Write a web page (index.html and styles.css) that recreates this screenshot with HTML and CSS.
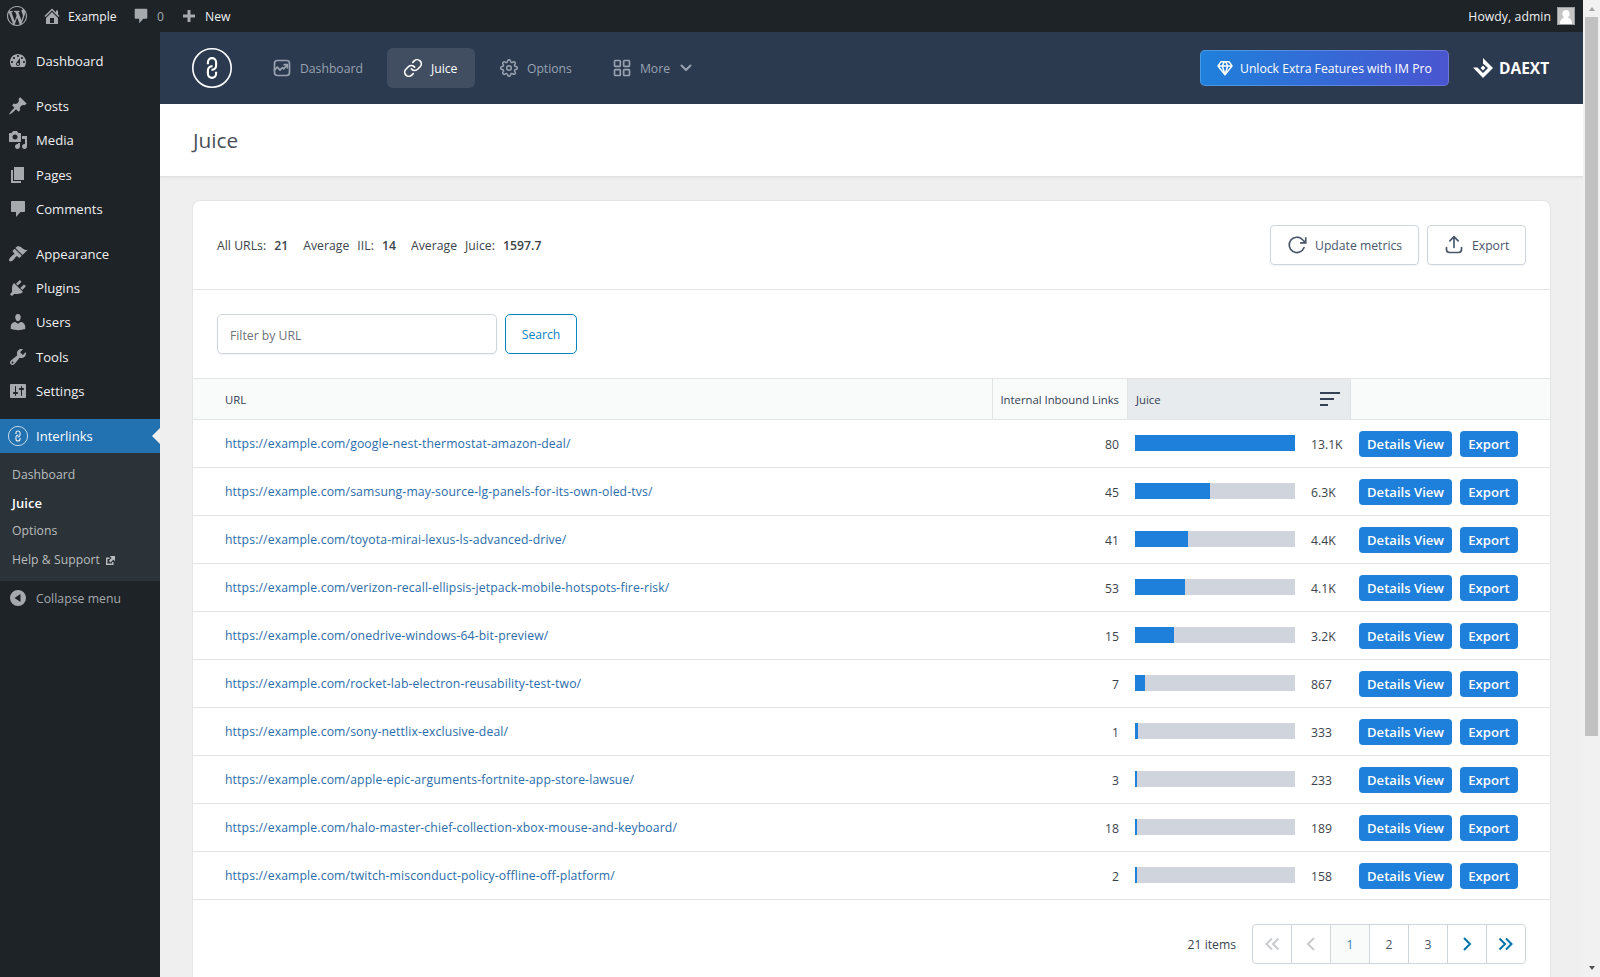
FILE: index.html
```html
<!DOCTYPE html>
<html lang="en">
<head>
<meta charset="utf-8">
<title>Juice</title>
<link rel="stylesheet" href="styles.css">
</head>
<body>
<svg class="defs" aria-hidden="true">
  <symbol id="i-wp" viewBox="0 0 20 20"><path d="M20 10c0-5.51-4.49-10-10-10C4.48 0 0 4.49 0 10c0 5.52 4.48 10 10 10 5.51 0 10-4.48 10-10zM7.78 15.37L4.37 6.22c.55-.02 1.17-.08 1.17-.08.5-.06.44-1.13-.06-1.11 0 0-1.45.11-2.37.11-.18 0-.37 0-.58-.01C4.12 2.69 6.87 1.11 10 1.11c2.33 0 4.45.87 6.05 2.34-.68-.11-1.65.39-1.65 1.58 0 .74.45 1.36.9 2.1.35.61.55 1.36.55 2.46 0 1.49-1.4 5-1.4 5l-3.03-8.37c.54-.02.82-.17.82-.17.5-.05.44-1.25-.06-1.22 0 0-1.44.12-2.38.12-.87 0-2.33-.12-2.33-.12-.5-.03-.56 1.2-.06 1.22l.92.08 1.26 3.41zM17.41 10c.24-.64.74-1.87.43-4.25.7 1.29 1.05 2.71 1.05 4.25 0 3.29-1.73 6.24-4.4 7.78.97-2.59 1.94-5.2 2.92-7.78zM6.1 18.09C3.12 16.65 1.11 13.53 1.11 10c0-1.3.23-2.48.72-3.59C3.25 10.3 4.67 14.2 6.1 18.09zm4.03-6.63l2.58 6.98c-.86.29-1.76.45-2.71.45-.79 0-1.57-.11-2.29-.33.81-2.38 1.62-4.74 2.42-7.1z"/></symbol>
  <symbol id="i-home" viewBox="0 0 20 20"><path d="M16 8.5l1.53 1.53-1.06 1.06L10 4.6l-6.47 6.49-1.06-1.06L10 2.5l4 4v-2h2v4zm-6-2.46l6 5.99V18H4v-5.97zM12 17v-5H8v5h4z"/></symbol>
  <symbol id="i-comment" viewBox="0 0 20 20"><path d="M4 2h12c.55 0 1 .45 1 1v9c0 .55-.45 1-1 1h-3.500l-4.500 5v-5H4c-.55 0-1-.45-1-1V3c0-.55.45-1 1-1z"/></symbol>
  <symbol id="i-dash" viewBox="0 0 20 20"><path d="M3.76 16h12.480c1.1-1.370 1.760-3.110 1.760-5 0-4.420-3.580-8-8-8s-8 3.580-8 8c0 1.890.66 3.630 1.760 5zM10 4c.55 0 1 .45 1 1s-.45 1-1 1-1-.45-1-1 .45-1 1-1zM6 6c.55 0 1 .45 1 1s-.45 1-1 1-1-.45-1-1 .45-1 1-1zm8 0c.55 0 1 .45 1 1s-.45 1-1 1-1-.45-1-1 .45-1 1-1zm-5.370 5.550L12 7v6c0 1.100-.9 2-2 2s-2-.9-2-2c0-.57.24-1.080.63-1.450zM4 10c.55 0 1 .45 1 1s-.45 1-1 1-1-.45-1-1 .45-1 1-1zm12 0c.55 0 1 .45 1 1s-.45 1-1 1-1-.45-1-1 .45-1 1-1zm-5 3c0-.55-.45-1-1-1s-1 .45-1 1 .45 1 1 1 1-.45 1-1z"/></symbol>
  <symbol id="i-post" viewBox="0 0 20 20"><path d="M10.440 3.020l1.820-1.820 6.360 6.350-1.830 1.820c-1.050-.68-2.480-.57-3.410.36l-.75.75c-.92.93-1.040 2.350-.35 3.410l-1.830 1.820-2.410-2.410-2.800 2.790c-.42.42-3.380 2.710-3.800 2.290s1.860-3.390 2.280-3.810l2.790-2.790L4.100 9.360l1.830-1.820c1.050.69 2.480.57 3.400-.36l.75-.75c.93-.92 1.050-2.350.36-3.410z"/></symbol>
  <symbol id="i-media" viewBox="0 0 20 20"><path d="M13 11V4c0-.55-.45-1-1-1h-1.670L9 1H5L3.670 3H2c-.55 0-1 .45-1 1v7c0 .55.45 1 1 1h10c.55 0 1-.45 1-1zM7 4.500c1.380 0 2.500 1.120 2.500 2.500S8.380 9.500 7 9.500 4.500 8.380 4.500 7 5.620 4.500 7 4.500zM14 6h5v10.500c0 1.380-1.120 2.500-2.500 2.500S14 17.880 14 16.500s1.120-2.500 2.500-2.500c.17 0 .34.02.5.05V9h-3V6zm-4 8.050V13h2v3.500c0 1.380-1.120 2.500-2.500 2.500S7 17.880 7 16.500 8.120 14 9.500 14c.17 0 .34.02.5.05z"/></symbol>
  <symbol id="i-page" viewBox="0 0 20 20"><path d="M6 15V2h10v13H6zm-1 1h8v2H3V5h2v11z"/></symbol>
  <symbol id="i-brush" viewBox="0 0 20 20"><path d="M14.480 11.060L7.410 3.990l1.500-1.500c.5-.56 2.300-.47 3.510.32 1.210.8 1.430 1.280 2.910 2.100 1.180.64 2.450 1.260 4.450.85zm-.71.71L6.700 4.700 4.930 6.470c-.39.39-.39 1.020 0 1.410l1.060 1.060c.39.39.39 1.030 0 1.420-.6.6-1.430 1.110-2.210 1.690-.35.26-.7.53-1.010.84C1.430 14.230.4 16.080 1.400 17.070c.99 1 2.840-.03 4.180-1.360.31-.31.58-.66.85-1.020.57-.78 1.080-1.610 1.690-2.210.39-.39 1.020-.39 1.410 0l1.060 1.060c.39.39 1.020.39 1.410 0z"/></symbol>
  <symbol id="i-plug" viewBox="0 0 20 20"><path d="M13.110 4.360L9.870 7.600 8 5.730l3.240-3.240c.35-.34 1.050-.2 1.560.32.52.51.66 1.210.31 1.550zm-8 1.770l.91-1.120 9.010 9.010-1.190.84c-.71.71-2.630 1.160-3.820 1.160H6.140L4.900 17.260c-.59.59-1.540.59-2.120 0-.59-.58-.59-1.530 0-2.120l1.240-1.240v-3.880c0-1.130.4-3.190 1.090-3.890zm7.260 3.970l3.240-3.240c.34-.35 1.040-.21 1.550.31.52.51.66 1.210.31 1.550l-3.240 3.250z"/></symbol>
  <symbol id="i-user" viewBox="0 0 20 20"><path d="M10 9.250c-2.270 0-2.730-3.440-2.730-3.440C7 4.020 7.820 2 9.970 2c2.160 0 2.980 2.020 2.710 3.810 0 0-.41 3.440-2.680 3.440zm0 2.570L12.720 10c2.390 0 4.520 2.330 4.520 4.530v2.490s-3.650 1.130-7.240 1.130c-3.650 0-7.240-1.130-7.240-1.130v-2.490c0-2.250 1.940-4.480 4.470-4.480z"/></symbol>
  <symbol id="i-tool" viewBox="0 0 20 20"><path d="M16.680 9.770c-1.340 1.340-3.300 1.670-4.950.99l-5.410 6.520c-.99.99-2.590.99-3.580 0s-.99-2.590 0-3.570l6.520-5.420c-.68-1.650-.35-3.610.99-4.950 1.280-1.280 3.120-1.620 4.720-1.060l-2.890 2.890 2.820 2.820 2.860-2.870c.53 1.580.18 3.390-1.080 4.650zM3.810 16.210c.4.39 1.040.39 1.430 0 .4-.4.4-1.040 0-1.430-.39-.4-1.030-.4-1.430 0-.39.39-.39 1.030 0 1.430z"/></symbol>
  <symbol id="i-sliders" viewBox="0 0 20 20"><path d="M18 16V4c0-.55-.45-1-1-1H3c-.55 0-1 .45-1 1v12c0 .55.45 1 1 1h14c.55 0 1-.45 1-1zM8 11h1c.55 0 1 .45 1 1s-.45 1-1 1H8v1.500c0 .28-.22.5-.5.5s-.5-.22-.5-.5V13H6c-.55 0-1-.45-1-1s.45-1 1-1h1V5.500c0-.28.22-.5.5-.5s.5.22.5.5V11zm5-2h-1c-.55 0-1-.45-1-1s.45-1 1-1h1V5.500c0-.28.22-.5.5-.5s.5.22.5.5V7h1c.55 0 1 .45 1 1s-.45 1-1 1h-1v5.500c0 .28-.22.5-.5.5s-.5-.22-.5-.5V9z"/></symbol>
  <symbol id="i-logo" viewBox="0 0 40 40"><g fill="none" stroke="currentColor"><circle cx="20" cy="20" r="19.200" stroke-width="1.600"/><g transform="translate(20 20) rotate(-45) scale(.82) translate(-12 -12)" stroke-width="2.600"><path d="M10 13a5 5 0 0 0 7.540.54l3-3a5 5 0 0 0-7.070-7.070l-1.720 1.710M14 11a5 5 0 0 0-7.540-.54l-3 3a5 5 0 0 0 7.070 7.070l1.710-1.710"/></g></g></symbol>
</svg>

<div class="screen">
<div class="page">
  <header class="adminbar">
    <svg class="ic ab-wp"><use href="#i-wp"/></svg>
    <svg class="ic ab-home"><use href="#i-home"/></svg><span class="ab-site">Example</span>
    <svg class="ic ab-com"><use href="#i-comment"/></svg><span class="ab-count">0</span>
    <svg class="ic ab-plus" viewBox="0 0 14 14"><path d="M5.500 1h3v4.500H13v3H8.500V13h-3V8.500H1v-3h4.500z"/></svg><span>New</span>
    <span class="ab-user">Howdy, admin</span>
    <svg class="avatar" viewBox="0 0 18 18"><path fill="#9a9da0" d="M0 0h18v18H0z"/><path fill="#c5c5c5" d="M1 1h16v16H1z"/><path fill="#fff" d="M9 3c2.200 0 3.600 1.600 3.600 3.700 0 1.700-.7 3-1.700 3.800 2.600.7 3.900 2.900 4.300 6.500H2.800c.4-3.600 1.700-5.800 4.300-6.500-1-.8-1.700-2.100-1.700-3.800C5.400 4.600 6.800 3 9 3z"/></svg>
  </header>

  <div class="body">
    <nav class="side">
      <a class="mi"><svg class="ic"><use href="#i-dash"/></svg>Dashboard</a>
      <div class="sep"></div>
      <a class="mi"><svg class="ic"><use href="#i-post"/></svg>Posts</a>
      <a class="mi"><svg class="ic"><use href="#i-media"/></svg>Media</a>
      <a class="mi"><svg class="ic"><use href="#i-page"/></svg>Pages</a>
      <a class="mi"><svg class="ic"><use href="#i-comment"/></svg>Comments</a>
      <div class="sep"></div>
      <a class="mi"><svg class="ic"><use href="#i-brush"/></svg>Appearance</a>
      <a class="mi"><svg class="ic"><use href="#i-plug"/></svg>Plugins</a>
      <a class="mi"><svg class="ic"><use href="#i-user"/></svg>Users</a>
      <a class="mi"><svg class="ic"><use href="#i-tool"/></svg>Tools</a>
      <a class="mi"><svg class="ic"><use href="#i-sliders"/></svg>Settings</a>
      <div class="sep"></div>
      <a class="mi current"><svg class="ic"><use href="#i-logo"/></svg>Interlinks</a>
      <div class="sub">
        <a>Dashboard</a>
        <a class="on">Juice</a>
        <a>Options</a>
        <a>Help &amp; Support <svg class="ext" viewBox="0 0 9 9"><path fill="none" stroke="currentColor" stroke-width="1.400" d="M3.500 2.200H.7v6.100h6.100V6"/><path d="M3.800 0H9v5.200L7.400 3.600 4.600 6.400 2.900 4.700 5.600 1.900z"/></svg></a>
      </div>
      <a class="mi collapse"><svg class="ic" viewBox="0 0 20 20"><path fill-rule="evenodd" d="M10 2a8 8 0 1 1 0 16 8 8 0 0 1 0-16zm2.500 4L6.500 10l6 4z"/></svg>Collapse menu</a>
    </nav>

    <main class="main">
      <div class="hero">
        <svg class="logo"><use href="#i-logo"/></svg>
        <div class="tabs">
          <a class="tab"><svg class="ln" viewBox="0 0 24 24"><rect x="3" y="3" width="18" height="18" rx="3.500"/><path d="M3 14.500l3.500-3.500 3 3.500 3-3 1.500 1.500 4.500-5M14.500 8H18.500v4"/></svg>Dashboard</a>
          <a class="tab on"><svg class="ln" viewBox="0 0 24 24"><path d="M10 13a5 5 0 0 0 7.540.54l3-3a5 5 0 0 0-7.070-7.070l-1.720 1.710M14 11a5 5 0 0 0-7.540-.54l-3 3a5 5 0 0 0 7.070 7.070l1.710-1.710"/></svg>Juice</a>
          <a class="tab"><svg class="ln" viewBox="0 0 24 24"><g transform="translate(1.100 1.100) scale(.91)"><circle cx="12" cy="12" r="3"/><path d="M19.400 15a1.650 1.650 0 0 0 .33 1.820l.06.06a2 2 0 0 1 0 2.830 2 2 0 0 1-2.830 0l-.06-.06a1.650 1.650 0 0 0-1.820-.33 1.650 1.650 0 0 0-1 1.510V21a2 2 0 0 1-2 2 2 2 0 0 1-2-2v-.09A1.650 1.650 0 0 0 9 19.400a1.650 1.650 0 0 0-1.820.33l-.06.06a2 2 0 0 1-2.830 0 2 2 0 0 1 0-2.830l.06-.06a1.650 1.650 0 0 0 .33-1.820 1.650 1.650 0 0 0-1.510-1H3a2 2 0 0 1-2-2 2 2 0 0 1 2-2h.09A1.650 1.650 0 0 0 4.600 9a1.650 1.650 0 0 0-.33-1.820l-.06-.06a2 2 0 0 1 0-2.830 2 2 0 0 1 2.830 0l.06.06a1.650 1.650 0 0 0 1.820.33H9a1.650 1.650 0 0 0 1-1.510V3a2 2 0 0 1 2-2 2 2 0 0 1 2 2v.09a1.650 1.650 0 0 0 1 1.510 1.650 1.650 0 0 0 1.820-.33l.06-.06a2 2 0 0 1 2.830 0 2 2 0 0 1 0 2.830l-.06.06a1.650 1.650 0 0 0-.33 1.820V9a1.650 1.650 0 0 0 1.510 1H21a2 2 0 0 1 2 2 2 2 0 0 1-2 2h-.09a1.650 1.650 0 0 0-1.510 1z"/></g></svg>Options</a>
          <a class="tab"><svg class="ln" viewBox="0 0 24 24"><rect x="3" y="3" width="7" height="7" rx="1"/><rect x="14" y="3" width="7" height="7" rx="1"/><rect x="3" y="14" width="7" height="7" rx="1"/><rect x="14" y="14" width="7" height="7" rx="1"/></svg>More<svg class="ln chev" viewBox="0 0 20 20"><path d="M5.500 7.500L10 12l4.500-4.500"/></svg></a>
        </div>
        <a class="unlock"><svg class="ln gem" viewBox="0 0 24 24"><path d="M1.500 9h21M12 22L8 9l3-6.500M12 22l4-13-3-6.500M12 22L1.500 9 6 2.500h12L22.500 9z"/></svg>Unlock Extra Features with IM Pro</a>
        <div class="daext"><svg viewBox="0 0 20 20"><path d="M10 0l10 10-10 10L0 9.500h4.500L10 15l5-5-5-4.500zM10 7.600l2.400 2.400-2.400 2.400L7.600 10z"/></svg><span>DAEXT</span></div>
      </div>
      <div class="title">Juice</div>

      <div class="wrap">
        <section class="card">
          <div class="stats">
            <div class="nums"><span>All URLs:</span><b>21</b><span class="g">Average</span><span>IIL:</span><b>14</b><span class="g">Average</span><span>Juice:</span><b>1597.7</b></div>
            <a class="btn upd"><svg class="ln" viewBox="0 0 24 24"><path d="M22.500 3.500v6h-6M20.500 15a9.200 9.200 0 1 1-1.800-9.300l3.800 3.800"/></svg><span>Update metrics</span></a>
            <a class="btn exp"><svg class="ln" viewBox="0 0 24 24"><path d="M21 15v2.500c0 2.500-1 3.500-3.500 3.500h-11C4 21 3 20 3 17.500V15M17 7l-5-5-5 5M12 2v13"/></svg><span>Export</span></a>
          </div>
          <div class="filter">
            <input class="inp" type="text" placeholder="Filter by URL">
            <a class="search">Search</a>
          </div>
          <div class="grid thead">
            <div class="c-url">URL</div><div class="c-iil">Internal Inbound Links</div>
            <div class="c-juice">Juice<svg class="sort" viewBox="0 0 20 14"><path d="M0 0h20v2H0zM0 6h14v2H0zM0 12h8v2H0z"/></svg></div><div class="c-act"></div>
          </div>
          <div class="grid row"><a class="c-url">https://example.com/google-nest-thermostat-amazon-deal/</a><div class="c-iil">80</div><div class="c-juice"><div class="bar"><i style="width:160px"></i></div><span>13.1K</span></div><div class="c-act"><a>Details View</a><a>Export</a></div></div>
          <div class="grid row"><a class="c-url">https://example.com/samsung-may-source-lg-panels-for-its-own-oled-tvs/</a><div class="c-iil">45</div><div class="c-juice"><div class="bar"><i style="width:75px"></i></div><span>6.3K</span></div><div class="c-act"><a>Details View</a><a>Export</a></div></div>
          <div class="grid row"><a class="c-url">https://example.com/toyota-mirai-lexus-ls-advanced-drive/</a><div class="c-iil">41</div><div class="c-juice"><div class="bar"><i style="width:53px"></i></div><span>4.4K</span></div><div class="c-act"><a>Details View</a><a>Export</a></div></div>
          <div class="grid row"><a class="c-url">https://example.com/verizon-recall-ellipsis-jetpack-mobile-hotspots-fire-risk/</a><div class="c-iil">53</div><div class="c-juice"><div class="bar"><i style="width:50px"></i></div><span>4.1K</span></div><div class="c-act"><a>Details View</a><a>Export</a></div></div>
          <div class="grid row"><a class="c-url">https://example.com/onedrive-windows-64-bit-preview/</a><div class="c-iil">15</div><div class="c-juice"><div class="bar"><i style="width:39px"></i></div><span>3.2K</span></div><div class="c-act"><a>Details View</a><a>Export</a></div></div>
          <div class="grid row"><a class="c-url">https://example.com/rocket-lab-electron-reusability-test-two/</a><div class="c-iil">7</div><div class="c-juice"><div class="bar"><i style="width:10px"></i></div><span>867</span></div><div class="c-act"><a>Details View</a><a>Export</a></div></div>
          <div class="grid row"><a class="c-url">https://example.com/sony-nettlix-exclusive-deal/</a><div class="c-iil">1</div><div class="c-juice"><div class="bar"><i style="width:3px"></i></div><span>333</span></div><div class="c-act"><a>Details View</a><a>Export</a></div></div>
          <div class="grid row"><a class="c-url">https://example.com/apple-epic-arguments-fortnite-app-store-lawsue/</a><div class="c-iil">3</div><div class="c-juice"><div class="bar"><i style="width:2px"></i></div><span>233</span></div><div class="c-act"><a>Details View</a><a>Export</a></div></div>
          <div class="grid row"><a class="c-url">https://example.com/halo-master-chief-collection-xbox-mouse-and-keyboard/</a><div class="c-iil">18</div><div class="c-juice"><div class="bar"><i style="width:2px"></i></div><span>189</span></div><div class="c-act"><a>Details View</a><a>Export</a></div></div>
          <div class="grid row"><a class="c-url">https://example.com/twitch-misconduct-policy-offline-off-platform/</a><div class="c-iil">2</div><div class="c-juice"><div class="bar"><i style="width:2px"></i></div><span>158</span></div><div class="c-act"><a>Details View</a><a>Export</a></div></div>
          <div class="foot">
            <span>21 items</span>
            <div class="pager">
              <a class="off"><svg viewBox="0 0 20 20"><path d="M10 4.500L4.500 10l5.500 5.500M16.500 4.500L11 10l5.500 5.500"/></svg></a>
              <a class="off"><svg viewBox="0 0 20 20"><path d="M13 4L7 10l6 6"/></svg></a>
              <a class="cur">1</a><a>2</a><a>3</a>
              <a class="go"><svg viewBox="0 0 20 20"><path d="M7 4l6 6-6 6"/></svg></a>
              <a class="go"><svg viewBox="0 0 20 20"><path d="M3.500 4.500L9 10l-5.500 5.500M10 4.500l5.500 5.500-5.500 5.500"/></svg></a>
            </div>
          </div>
        </section>
      </div>
    </main>
  </div>
</div>
<div class="scroll"><i class="up"></i><i class="thumb"></i><i class="down"></i></div>
</div>
</body>
</html>
```
FILE: styles.css
```css
* { box-sizing: border-box; }
body { margin: 0; font-family: "Open Sans", "Noto Sans", sans-serif; font-size: 12.2px; color: #3c434a; background: #efefef; overflow: hidden; }
.defs { position: absolute; width: 0; height: 0; }
.screen { display: flex; height: 977px; overflow: hidden; }
.page { flex: 1; min-width: 0; display: flex; flex-direction: column; }
.ic { width: 20px; height: 20px; fill: currentColor; flex: none; display: block; }
.ln { width: 20px; height: 20px; fill: none; stroke: currentColor; stroke-width: 2; stroke-linecap: round; stroke-linejoin: round; flex: none; display: block; }

.adminbar { height: 32px; background: #1d2327; color: #f0f0f1; display: flex; align-items: center; padding: 0 8px 0 7px; font-size: 12.2px; flex: none; }
.adminbar .ic { color: #a7aaad; }
.ab-wp { margin-right: 15px; }
.ab-home { margin-right: 6px; }
.ab-site { width: 64px; }
.adminbar .ab-com { width: 18px; height: 18px; margin-right: 7px; }
.ab-count { color: #a7aaad; width: 25px; }
.adminbar .ab-plus { width: 14px; height: 14px; margin-right: 9px; }
.ab-user { margin-left: auto; margin-right: 6px; letter-spacing: .08px; }
.avatar { width: 18px; height: 18px; }

.body { flex: 1; display: flex; min-height: 0; }
.side { width: 160px; background: #1d2327; padding-top: 12px; flex: none; }
.mi { display: flex; align-items: center; height: 34.2px; padding-left: 8px; color: #f0f0f1; font-size: 13.1px; }
.mi .ic { color: #a7aaad; margin-right: 8px; }
.sep { height: 11px; }
.current { position: relative; background: #2271b1; color: #fff; }
.mi.current .ic { color: #f0f4f8; }
.current::after { content: ""; position: absolute; right: 0; top: 9px; border: 8px solid transparent; border-left: 0; border-right-color: #efefef; }
.sub { background: #2c3338; padding: 8px 0 7px; }
.sub a { display: block; height: 28.2px; line-height: 28.2px; padding-left: 12px; color: #b9bcbe; font-size: 12.2px; letter-spacing: .05px; }
.sub .on { color: #fff; font-weight: 600; font-size: 13px; }
.ext { width: 9px; height: 9px; fill: currentColor; margin-left: 3px; vertical-align: -1px; }
.collapse { color: #a7aaad; font-size: 12.2px; letter-spacing: .05px; padding-top: 1px; }

.main { flex: 1; min-width: 0; }
.hero { height: 72px; background: #2c3a50; display: flex; align-items: center; padding: 0 32px; }
.logo { width: 40px; height: 40px; color: #fff; margin-right: 24px; }
.tabs { display: flex; gap: 8px; flex: 1; }
.tab { display: flex; align-items: center; gap: 8px; height: 40px; padding: 0 16px; border-radius: 6px; color: #98a2b0; font-size: 12.2px; }
.tab.on { background: #414e62; color: #fff; width: 88px; }
.chev { margin-left: -2px; }
.unlock { height: 36px; width: 249px; display: flex; align-items: center; padding-left: 16px; gap: 7px; border-radius: 5px; color: #fff; background: linear-gradient(90deg, #1f80db, #4a55d0); border: 1px solid; border-color: rgba(255, 255, 255, .2); background-origin: border-box; }
.gem { width: 16px; height: 16px; stroke-width: 2.2; }
.daext { display: flex; align-items: center; gap: 6px; margin-left: 24px; color: #fff; width: 78px; }
.daext svg { width: 20px; height: 20px; fill: #fff; flex: none; }
.daext span { font-size: 15.500px; font-weight: 700; line-height: 20px; }
.title { height: 73px; background: #fff; border-bottom: 1px solid #e0e0e0; padding-left: 33px; line-height: 73px; font-size: 20.800px; color: #4a5058; box-shadow: 0 1px 2px rgba(0, 0, 0, .05); }

.wrap { padding: 23px 32px 0; }
.card { background: #fff; border: 1px solid #e2e4e6; border-radius: 8px 8px 0 0; height: 800px; }
.stats { display: flex; align-items: center; padding: 24px; height: 89px; border-bottom: 1px solid #e2e4e6; }
.nums { flex: 1; display: flex; gap: 8px; letter-spacing: .04px; }
.nums b { font-weight: 600; }
.nums .g { margin-left: 7px; }
.btn { height: 40px; display: flex; align-items: center; border: 1px solid #cfd5dd; border-radius: 4px; padding-left: 16px; gap: 8px; color: #48566a; box-shadow: 0 1px 2px rgba(16, 24, 40, .06); }
.btn span { padding-top: 1px; }
.upd { width: 149px; }
.exp { width: 99px; margin-left: 8px; }
.filter { display: flex; gap: 8px; padding: 24px; height: 89px; border-bottom: 1px solid #e2e4e6; }
.inp { width: 280px; height: 40px; border: 1px solid #cfd5dd; border-radius: 5px; padding: 2px 12px 0; font: inherit; box-shadow: 0 1px 2px rgba(16, 24, 40, .06); background: #fff; }
.inp::placeholder { color: #6c727a; opacity: 1; }
.search { width: 72px; height: 40px; border: 1px solid #0783be; border-radius: 5px; color: #0783be; display: flex; align-items: center; justify-content: center; }
.grid { display: grid; grid-template-columns: 799px 135px 223px 1fr; border-bottom: 1px solid #e2e4e6; }
.grid > * { display: flex; align-items: center; }
.thead { height: 41px; background: #f9fafa; font-size: 11.300px; color: #344054; }
.thead > * + * { border-left: 1px solid #dfe3e6; }
.c-url { padding-left: 32px; }
.c-iil { justify-content: flex-end; padding-right: 8px; }
.c-juice { padding-left: 8px; }
.thead .c-juice { background: #e8ebee; justify-content: space-between; padding-right: 10px; }
.sort { width: 20px; height: 14px; fill: #344054; }
.row { height: 48px; }
.row .c-url { color: #2b6cab; letter-spacing: .14px; }
.row .c-iil { padding-top: 2px; }
.row .c-juice span { padding-top: 2px; }
.bar { width: 160px; height: 16px; background: #d0d5dd; margin: 0 16px 1px 0; }
.bar i { display: block; height: 16px; background: #1f80db; }
.c-act { padding-left: 9px; gap: 8px; }
.row .c-act a { height: 26px; line-height: 26px; border-radius: 4px; background: #1f80db; color: #fff; font-weight: 600; font-size: 13.1px; width: 93px; text-align: center; margin-top: 1px; }
.row .c-act a + a { width: 58px; }
.foot { display: flex; justify-content: flex-end; align-items: center; gap: 16px; padding: 24px; }
.pager { display: flex; border: 1px solid #cfd5dd; border-radius: 4px; height: 40px; width: 274px; overflow: hidden; }
.pager a { width: 39px; display: flex; align-items: center; justify-content: center; border-right: 1px solid #cfd5dd; color: #48566a; }
.pager a:last-child { border-right: 0; width: 38px; }
.pager .cur { background: #f9fafa; color: #3b7fb0; }
.pager svg { width: 20px; height: 20px; fill: none; stroke: currentColor; stroke-width: 2; }
.pager .off { color: #c9cbce; }
.pager .go { color: #0073aa; }

.scroll { width: 17px; background: #f1f1f1; display: flex; flex-direction: column; align-items: center; flex: none; }
.scroll .up { width: 0; border: 3.500px solid transparent; border-top: 0; border-bottom: 4px solid #a3a3a3; margin: 7px 0 6px; }
.scroll .thumb { width: 13px; height: 719px; background: #c1c1c1; }
.scroll .down { width: 0; border: 3.500px solid transparent; border-bottom: 0; border-top: 4px solid #505050; margin-top: auto; margin-bottom: 7px; }
```
